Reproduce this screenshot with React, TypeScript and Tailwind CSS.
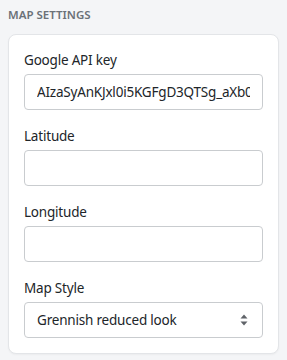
import React from 'react';

const font = { fontFamily: '"Segoe UI", "Noto Sans", "Open Sans", sans-serif' };

function Field({ label, children }: { label: string; children: React.ReactNode }) {
  return (
    <div>
      <div className="mb-1 text-[13.5px] leading-5 tracking-[-0.2px] text-[#212529]">{label}</div>
      {children}
    </div>
  );
}

function TextInput({ value = '' }: { value?: string }) {
  return (
    <input
      readOnly
      value={value}
      className="block h-9 w-full rounded-[4px] border border-[#c9cccf] bg-white px-3 text-[13.5px] tracking-[-0.2px] text-[#212529] outline-none"
      style={font}
    />
  );
}

export default function App() {
  return (
    <div className="min-h-[360px] w-[287px] bg-[#f4f5f7] px-2 pt-[6px]" style={font}>
      <div className="mb-[10px] h-[18px] text-[11.5px] font-semibold uppercase leading-[18px] text-[#6b7178]">
        Map Settings
      </div>
      <div className="flex flex-col gap-4 rounded-lg border border-[#e3e5e8] bg-white px-[15px] py-[15px] shadow-[0_1px_2px_rgba(0,0,0,0.04)]">
        <Field label="Google API key">
          <TextInput value="AIzaSyAnKJxl0i5KGFgD3QTSg_aXb0abcdefgh" />
        </Field>
        <Field label="Latitude">
          <TextInput />
        </Field>
        <Field label="Longitude">
          <TextInput />
        </Field>
        <Field label="Map Style">
          <div className="flex h-9 w-full items-center justify-between rounded-[4px] border border-[#c9cccf] bg-white pl-3 pr-[14px] text-[13.5px] tracking-[-0.2px] text-[#212529]">
            <span>Grennish reduced look</span>
            <svg width="8" height="12" viewBox="0 0 8 12" fill="#5f6368">
              <path d="M4 0.5 L7.5 4.5 L0.5 4.5 Z" />
              <path d="M0.5 7.5 L7.5 7.5 L4 11.5 Z" />
            </svg>
          </div>
        </Field>
      </div>
    </div>
  );
}
